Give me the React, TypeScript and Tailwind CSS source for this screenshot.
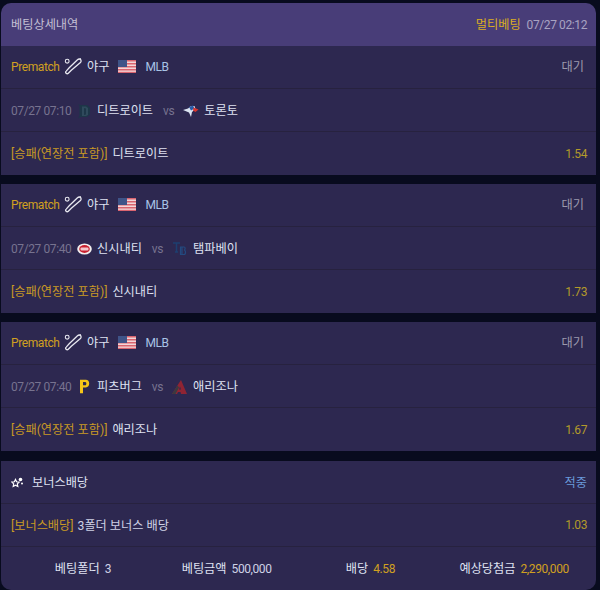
import React from 'react';

const Bat = () => (
  <svg width="18" height="18" viewBox="0 0 18 18" fill="none" className="shrink-0">
    <path d="M16.400 1.600c-.9-.8-2-.6-2.900.2L5.200 9.800l-3 3.300c-.7.7-.7 1.500-.1 2.100.7.7 1.500.7 2.200 0l3-3 9.100-7.600c.9-1 1-2 .000-3.600z" stroke="#e8e8f0" strokeWidth="1.300" />
    <circle cx="3.200" cy="3.200" r="1.900" stroke="#e8e8f0" strokeWidth="1.100" />
  </svg>
);

const UsFlag = () => (
  <svg width="18" height="13" viewBox="0 0 18 13" className="shrink-0">
    <rect width="18" height="13" fill="#f3d6d8" />
    <rect y="0" width="18" height="1.500" fill="#d9646f" />
    <rect y="3" width="18" height="1.500" fill="#d9646f" />
    <rect y="6" width="18" height="1.500" fill="#d9646f" />
    <rect y="9" width="18" height="1.500" fill="#d9646f" />
    <rect y="11.800" width="18" height="1.200" fill="#d9646f" />
    <rect width="9" height="7" fill="#3f5488" />
  </svg>
);

const Tigers = () => (
  <svg width="13" height="16" viewBox="0 0 13 16" className="shrink-0">
    <path d="M0 1l2 1h7l3 2.500v7L9 14H2.500L0 15.500l1.500-2.500V3z" fill="#1d3648" />
    <path d="M4 3.500h4l2 1.500v7l-2 1H4zM6 5v7l2-.5v-6z" fill="#2f4a5c" fillRule="evenodd" />
  </svg>
);

const BlueJays = () => (
  <svg width="16" height="14" viewBox="0 0 16 14" className="shrink-0">
    <path d="M0 6l5-1.500L8 2l3.500 0 1 3L9 8l-1 5-2-4.500z" fill="#dbe4f2" />
    <path d="M6 3l4-1.500 1.500 3L8 6.500z" fill="#2a5ca8" />
    <path d="M10.500 3.500L15.500 5.500 12.500 8 10 6.500z" fill="#d8352f" />
  </svg>
);

const Reds = () => (
  <svg width="15" height="12" viewBox="0 0 15 12" className="shrink-0">
    <ellipse cx="7.500" cy="6" rx="7.300" ry="5.500" fill="#f2eeee" />
    <ellipse cx="7.500" cy="6" rx="5.300" ry="3.900" fill="#c8202f" />
    <rect x="3.500" y="4.500" width="8" height="3" rx="1" fill="#f3c8cc" />
  </svg>
);

const Rays = () => (
  <svg width="16" height="16" viewBox="0 0 16 16" fill="none" className="shrink-0">
    <path d="M1 2h7M4.500 2v9M3 11h3" stroke="#1d3f70" strokeWidth="1.500" />
    <path d="M8.500 6h3.500c1.500 0 1.500 3 0 3 2 0 2 4.500 0 4.500H8.500zM10 6v7.500" stroke="#234a80" strokeWidth="1.200" />
  </svg>
);

const Pirates = () => (
  <svg width="11" height="15" viewBox="0 0 11 15" fill="none" className="shrink-0">
    <path d="M1 .8h5.800c2.300 0 3.400 1.700 3.400 3.800S9 8.500 6.800 8.500H4v5.700H1z" fill="#f5c518" />
    <path d="M4 3v3.300h2.300c1.400 0 1.400-3.300 0-3.300z" fill="#2d2850" />
  </svg>
);

const Diamondbacks = () => (
  <svg width="16" height="14" viewBox="0 0 16 14" className="shrink-0">
    <path d="M0 14l7-11L9 0l6 14H9l-.5-2H6l-1 2z" fill="#8f2433" />
    <path d="M0 14l5.500-8.500L7 7.500 3.500 14z" fill="#3a3a40" />
    <path d="M7 9.500l1-3 1 3z" fill="#2e294e" />
  </svg>
);

const Bonus = () => (
  <svg width="13" height="13" viewBox="0 0 13 13" className="shrink-0">
    <path d="M4.500 3.500l1.100 2.300 2.500.3-1.800 1.800.5 2.600-2.300-1.200-2.300 1.200.5-2.600L.900 6.100l2.500-.3z" fill="none" stroke="#fff" strokeWidth="1.200" />
    <circle cx="9.500" cy="3.500" r="1.800" fill="#fff" />
    <circle cx="11" cy="7.500" r="1" fill="#fff" />
  </svg>
);

const row = 'flex items-center justify-between h-[43px] pl-[10px] pr-[9px] pt-[2px]';
const rowLine = 'flex items-center justify-between h-[43px] pl-[10px] pr-[9px] pt-[2px] border-b border-[#27223f]';
const topRow = 'flex items-center justify-between h-[43px] pl-[10px] pr-[9px] border-b border-[#27223f]';
const ko = 'text-[12.2px] tracking-normal';

const games = [
  { time: '07/27 07:10', home: '디트로이트', homeLogo: <Tigers />, away: '토론토', awayLogo: <BlueJays />, pick: '디트로이트', odds: '1.54' },
  { time: '07/27 07:40', home: '신시내티', homeLogo: <Reds />, away: '탬파베이', awayLogo: <Rays />, pick: '신시내티', odds: '1.73' },
  { time: '07/27 07:40', home: '피츠버그', homeLogo: <Pirates />, away: '애리조나', awayLogo: <Diamondbacks />, pick: '애리조나', odds: '1.67' },
];

const GameCard = ({ game, first }: { game: (typeof games)[number]; first: boolean }) => (
  <div className={first ? 'bg-[#2d2850]' : 'bg-[#2d2850] mt-[9px]'}>
    <div className={topRow}>
      <div className="flex items-center">
        <span className="w-[48px] text-[#d1a020]">Prematch</span>
        <span className="ml-[5px]"><Bat /></span>
        <span className={`ml-[5px] text-[#dfe2f2] ${ko}`}>야구</span>
        <span className="ml-[9px]"><UsFlag /></span>
        <span className="ml-[9px] text-[#a9c3e6]">MLB</span>
      </div>
      <span className={`mr-[3px] text-[#9c99ad] ${ko}`}>대기</span>
    </div>
    <div className={rowLine}>
      <div className="flex items-center">
        <span className="w-[60px] whitespace-nowrap text-[#77738f]">{game.time}</span>
        <span className="ml-[6px] flex w-[14px] justify-center">{game.homeLogo}</span>
        <span className={`ml-[6px] text-[#dfe2f2] ${ko}`}>{game.home}</span>
        <span className="ml-[10px] text-[#77738f]">vs</span>
        <span className="ml-[9px] flex w-[16px] justify-center">{game.awayLogo}</span>
        <span className={`ml-[5px] text-[#dfe2f2] ${ko}`}>{game.away}</span>
      </div>
    </div>
    <div className={row}>
      <div className="flex items-center">
        <span className={`text-[#c99a24] ${ko}`}>[승패(연장전 포함)]</span>
        <span className={`ml-[5px] text-[#dfe2f2] ${ko}`}>{game.pick}</span>
      </div>
      <span className="mb-[2px] text-[#b39a2a]">{game.odds}</span>
    </div>
  </div>
);

export default function App() {
  return (
    <div className="h-[590px] w-[600px] overflow-hidden bg-[#080b1e] pt-[3px] pl-px pr-[4px] text-[12px] tracking-[-0.4px] font-['Roboto','Noto_Sans_CJK_KR',sans-serif]">
      <div className="flex h-[43px] items-center justify-between rounded-t-[10px] bg-[#483d78] pl-[10px] pr-[9px] pt-[2px]">
        <span className={`text-[#c4c0d4] ${ko}`}>베팅상세내역</span>
        <div className="flex items-center gap-[6px]">
          <span className={`text-[#dcae22] ${ko}`}>멀티베팅</span>
          <span className="text-[#a8a3c2]">07/27 02:12</span>
        </div>
      </div>
      {games.map((game, i) => (
        <GameCard key={i} game={game} first={i === 0} />
      ))}
      <div className="mt-[10px] rounded-b-[10px] bg-[#2d2850]">
        <div className={rowLine}>
          <div className="flex items-center">
            <Bonus />
            <span className={`ml-[8px] text-[#dfe2f2] ${ko}`}>보너스배당</span>
          </div>
          <span className={`text-[#6a9ada] ${ko}`}>적중</span>
        </div>
        <div className={rowLine}>
          <div className="flex items-center">
            <span className={`text-[#c99a24] ${ko}`}>[보너스배당]</span>
            <span className={`ml-[4px] text-[#cfd2e6] ${ko}`}>3폴더 보너스 배당</span>
          </div>
          <span className="mb-[2px] text-[#b39a2a]">1.03</span>
        </div>
        <div className="grid h-[43px] grid-cols-4 items-center px-[10px] pt-[2px]">
          <div className="flex items-center justify-center gap-[5px]"><span className={`text-[#dfe2f2] ${ko}`}>베팅폴더</span><span className="text-[#cfd2e6]">3</span></div>
          <div className="flex items-center justify-center gap-[5px]"><span className={`text-[#dfe2f2] ${ko}`}>베팅금액</span><span className="text-[#cfd2e6]">500,000</span></div>
          <div className="flex items-center justify-center gap-[5px]"><span className={`text-[#dfe2f2] ${ko}`}>배당</span><span className="text-[#d1a020]">4.58</span></div>
          <div className="flex items-center justify-center gap-[5px]"><span className={`text-[#dfe2f2] ${ko}`}>예상당첨금</span><span className="text-[#d1a020]">2,290,000</span></div>
        </div>
      </div>
    </div>
  );
}
